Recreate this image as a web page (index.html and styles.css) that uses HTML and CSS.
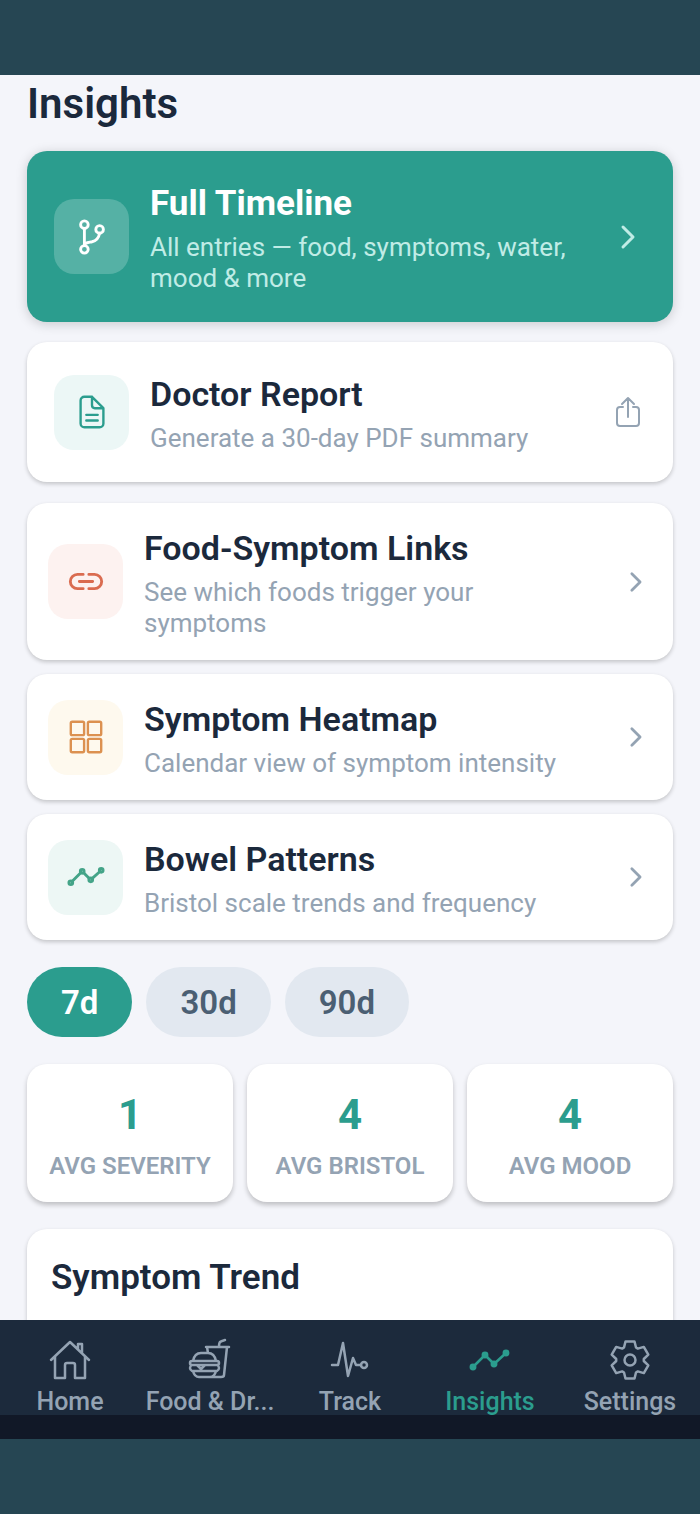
FILE: index.html
```html
<!DOCTYPE html>
<html lang="en">
<head>
<meta charset="utf-8">
<meta name="viewport" content="width=device-width, initial-scale=1">
<title>Insights</title>
<link rel="stylesheet" href="styles.css">
</head>
<body>
<div class="app">
  <main class="content">
    <h1 class="page-title">Insights</h1>

    <div class="features">
      <button class="card card-roomy card-primary" type="button">
        <span class="tile tile-glass">
          <svg class="icon icon-bold" viewBox="0 0 40 40"><circle cx="12" cy="7" r="4"/><circle cx="28" cy="12" r="4"/><circle cx="12" cy="33" r="4"/><path d="M12 11v18M28 16c-1 6-4 8-8 9-5 1-8 1-8 4"/></svg>
        </span>
        <span class="card-text">
          <span class="card-title">Full Timeline</span>
          <span class="card-sub">All entries — food, symptoms, water, mood &amp; more</span>
        </span>
        <svg class="chevron chevron-large" viewBox="0 0 36 36"><path d="M13 8l10 10-10 10"/></svg>
      </button>
      <button class="card card-roomy" type="button">
        <span class="tile tile-teal">
          <svg class="icon" viewBox="0 0 40 40"><path d="M20 4h-8a4 4 0 0 0-4 4v24a4 4 0 0 0 4 4h16a4 4 0 0 0 4-4V16zM20 4v9a3 3 0 0 0 3 3h9M14 23h12M14 29h12"/></svg>
        </span>
        <span class="card-text">
          <span class="card-title">Doctor Report</span>
          <span class="card-sub">Generate a 30-day PDF summary</span>
        </span>
        <svg class="share" viewBox="0 0 36 36"><path d="M13 13h-3a3 3 0 0 0-3 3v13a3 3 0 0 0 3 3h16a3 3 0 0 0 3-3V16a3 3 0 0 0-3-3h-3M18 23V4M12 10l6-6 6 6"/></svg>
      </button>
    </div>

    <div class="links">
      <button class="card" type="button">
        <span class="tile tile-coral">
          <svg class="icon icon-bold" viewBox="0 0 40 40"><path d="M17 12h-6a7.500 7.500 0 0 0 0 15h6M23 12h6a7.500 7.500 0 0 1 0 15h-6M13 19.500h14"/></svg>
        </span>
        <span class="card-text">
          <span class="card-title">Food-Symptom Links</span>
          <span class="card-sub">See which foods trigger your symptoms</span>
        </span>
        <svg class="chevron" viewBox="0 0 36 36"><path d="M14 9l9 9-9 9"/></svg>
      </button>
      <button class="card" type="button">
        <span class="tile tile-amber">
          <svg class="icon" viewBox="0 0 40 40"><rect x="4" y="4" width="14" height="14" rx="1.5"/><rect x="22" y="4" width="14" height="14" rx="1.5"/><rect x="4" y="22" width="14" height="14" rx="1.5"/><rect x="22" y="22" width="14" height="14" rx="1.5"/></svg>
        </span>
        <span class="card-text">
          <span class="card-title">Symptom Heatmap</span>
          <span class="card-sub">Calendar view of symptom intensity</span>
        </span>
        <svg class="chevron" viewBox="0 0 36 36"><path d="M14 9l9 9-9 9"/></svg>
      </button>
      <button class="card" type="button">
        <span class="tile tile-green">
          <svg class="icon icon-bold" viewBox="0 0 40 40"><path d="M5 25L15 15M18 16l5 5M26 22l9-8"/><circle cx="4" cy="26" r="2"/><circle cx="16" cy="14" r="2"/><circle cx="25" cy="23" r="2"/><circle cx="36" cy="13" r="2"/></svg>
        </span>
        <span class="card-text">
          <span class="card-title">Bowel Patterns</span>
          <span class="card-sub">Bristol scale trends and frequency</span>
        </span>
        <svg class="chevron" viewBox="0 0 36 36"><path d="M14 9l9 9-9 9"/></svg>
      </button>
    </div>

    <div class="ranges">
      <button class="pill pill-active" type="button" aria-pressed="true">7d</button>
      <button class="pill" type="button" aria-pressed="false">30d</button>
      <button class="pill" type="button" aria-pressed="false">90d</button>
    </div>

    <div class="stats">
      <div class="stat"><span class="stat-value">1</span><span class="stat-label">AVG SEVERITY</span></div>
      <div class="stat"><span class="stat-value">4</span><span class="stat-label">AVG BRISTOL</span></div>
      <div class="stat"><span class="stat-value">4</span><span class="stat-label">AVG MOOD</span></div>
    </div>

    <section class="trend">
      <h2 class="trend-title">Symptom Trend</h2>
    </section>
  </main>

  <nav class="tabs">
    <a class="tab" href="#home">
      <svg class="tab-icon" viewBox="0 0 44 44"><path d="M3 22L22 4l19 18M7 19v21h10V27q0-2 2-2h6q2 0 2 2v13h10V19M30 11V6h4v9"/></svg>
      <span class="tab-label">Home</span>
    </a>
    <a class="tab" href="#food" aria-label="Food &amp; Drink">
      <svg class="tab-icon" viewBox="0 0 44 44"><path d="M5 23c1-5 4-8 8-8h7c4 0 7 3 8 8M4 23h25q2 0 2 2t-2 2H4q-2 0-2-2t2-2M9 27l4 4 4-4M4 27q-2 1-2 3t2 3h25q2-1 2-3t-2-3M5 33c1 4 3 6 6 6h11c3 0 5-2 6-6M18 9h23M19 9l1 6M39 9l-3 28q0 2-3 2H22M31 9q0-4 1-5t5-2"/></svg>
      <span class="tab-label">Food &amp; Dr...</span>
    </a>
    <a class="tab" href="#track">
      <svg class="tab-icon" viewBox="0 0 44 44"><path d="M4 27h6L15 5l5 33 5-18 3 7h5"/><circle cx="36" cy="27" r="3"/></svg>
      <span class="tab-label">Track</span>
    </a>
    <a class="tab tab-active" href="#insights" aria-current="page">
      <svg class="tab-icon" viewBox="0 0 44 44"><path d="M5 29L17 17l9 9L38 15"/><circle class="dot" cx="5" cy="29" r="2.2"/><circle class="dot" cx="17" cy="17" r="2.2"/><circle class="dot" cx="26" cy="26" r="2.2"/><circle class="dot" cx="38" cy="15" r="2.2"/></svg>
      <span class="tab-label">Insights</span>
    </a>
    <a class="tab" href="#settings">
      <svg class="tab-icon" viewBox="0 0 44 44"><path d="M17.500 3.500h9l1.500 6 1.800 1.100 6-1.700 4.500 7.800-4.500 4.300v2l4.500 4.300-4.500 7.800-6-1.700-1.800 1.100-1.500 6h-9l-1.500-6-1.800-1.100-6 1.700-4.500-7.800 4.500-4.300v-2l-4.500-4.300 4.500-7.800 6 1.700 1.800-1.100z"/><circle cx="22" cy="22" r="5.500"/></svg>
      <span class="tab-label">Settings</span>
    </a>
  </nav>
  <div class="gesture-bar"></div>
</div>
</body>
</html>
```
FILE: styles.css
```css
* { box-sizing: border-box; }

body {
  margin: 0;
  background: #264653;
  color: #1b293c;
  font-family: Roboto, "Liberation Sans", sans-serif;
}

button {
  border: 0;
  color: inherit;
  font: inherit;
  text-align: left;
  cursor: pointer;
}

svg {
  flex: none;
  fill: none;
  stroke: currentColor;
  stroke-width: 2.5;
  stroke-linecap: round;
  stroke-linejoin: round;
}

.app {
  display: flex;
  flex-direction: column;
  height: 100vh;
  padding: 75px 0;
}

.content {
  flex: 1;
  min-height: 0;
  overflow: hidden;
  padding: 4px 27px 0;
  background: #f4f5fa;
}

.page-title {
  margin: 0 0 22px;
  font-size: 42px;
  line-height: 50px;
  font-weight: 600;
}

.features { display: grid; gap: 20px; margin-bottom: 21px; }
.links { display: grid; gap: 14px; }

.card {
  display: flex;
  align-items: center;
  gap: 21px;
  width: 100%;
  padding: 21px;
  border-radius: 20px;
  background: #fff;
  box-shadow: 0 2px 4px rgba(0, 0, 0, 0.2);
}

.card-roomy { padding: 28px 27px; }

.card-primary {
  background: #2b9d8e;
  color: #fff;
  box-shadow: 0 2px 12px rgba(0, 0, 0, 0.18);
}

.tile {
  display: flex;
  flex: none;
  align-items: center;
  justify-content: center;
  width: 75px;
  height: 75px;
  border-radius: 20px;
}

.tile-glass { background: #55b1a5; }
.tile-teal { background: #ecf7f6; color: #2b9d8e; }
.tile-coral { background: #fdf2f0; color: #da6c50; }
.tile-amber { background: #fef9ee; color: #dc9150; }
.tile-green { background: #edf7f5; color: #44a488; }

.icon { width: 38px; height: 38px; }
.icon-bold { stroke-width: 3; }

.card-text { flex: 1; min-width: 0; padding-top: 4px; }
.card-title {
  display: block;
  font-size: 34px;
  line-height: 41px;
  font-weight: 600;
}
.card-primary .card-title { font-size: 35px; font-weight: 700; }

.card-sub {
  display: block;
  margin-top: 8px;
  color: #94a3b3;
  font-size: 26px;
  line-height: 31px;
}
.card-primary .card-sub { color: #c0ece6; }

.chevron { width: 33px; height: 36px; color: #94a3b3; stroke-width: 3; }
.chevron-large { width: 36px; color: #c0ece6; }
.share { width: 36px; height: 36px; color: #94a3b3; stroke-width: 2; }

.ranges { display: flex; gap: 14px; margin: 27px 0; }

.pill {
  height: 70px;
  padding: 0 34px;
  border-radius: 35px;
  background: #e2e8f0;
  color: #4b5f73;
  font-size: 33px;
  font-weight: 600;
}
.pill-active { background: #2b9d8e; color: #fff; }

.stats {
  display: grid;
  grid-template-columns: repeat(3, 1fr);
  gap: 14px;
  margin-bottom: 27px;
}

.stat {
  display: grid;
  gap: 12px;
  padding: 27px 8px 21px;
  border-radius: 20px;
  background: #fff;
  box-shadow: 0 3px 5px rgba(0, 0, 0, 0.22);
  text-align: center;
}
.stat-value { color: #2b9d8e; font-size: 42px; line-height: 48px; font-weight: 700; }
.stat-label { color: #94a3b3; font-size: 24px; line-height: 30px; font-weight: 600; white-space: nowrap; }

.trend {
  min-height: 200px;
  padding: 28px 24px;
  border-radius: 20px;
  background: #fff;
  box-shadow: 0 2px 4px rgba(0, 0, 0, 0.2);
}
.trend-title {
  margin: 0;
  font-size: 35px;
  line-height: 41px;
  font-weight: 600;
}

.tabs {
  display: grid;
  grid-template-columns: repeat(5, 1fr);
  padding-top: 18px;
  background: #1c2a3c;
}

.tab {
  display: flex;
  flex-direction: column;
  align-items: center;
  gap: 6px;
  min-width: 0;
  color: #94a3b3;
  text-decoration: none;
}
.tab-active { color: #2b9d8e; }
.tab-icon { width: 44px; height: 44px; }
.tab-label {
  font-size: 25px;
  line-height: 27px;
  font-weight: 500;
  white-space: nowrap;
}
.dot { fill: currentColor; }

.gesture-bar { height: 24px; background: #111827; }
```
